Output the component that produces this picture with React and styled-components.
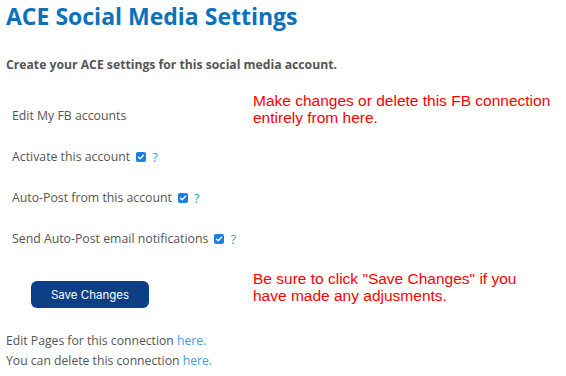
import React from 'react';
import styled, { createGlobalStyle } from 'styled-components';

const Global = createGlobalStyle`
    body {
        margin: 0;
        background: #fff;
        font-family: "Open Sans", "DejaVu Sans", sans-serif;
    }
`;

const Page = styled.div`
    width: 566px;
    height: 376px;
    padding: 0 0 0 6px;
    box-sizing: border-box;
    overflow: hidden;
`;

const Title = styled.h1`
    margin: 0;
    padding-top: 1px;
    font-size: 23px;
    line-height: 30px;
    font-weight: 700;
    color: #0b72ba;
`;

const Lead = styled.p`
    margin: 25px 0 0;
    font-size: 12.2px;
    line-height: 18px;
    font-weight: 700;
    color: #555;
`;

const Grid = styled.div`
    display: grid;
    grid-template-columns: 247px 1fr;
    margin-top: 21px;
`;

const Row = styled.div`
    display: flex;
    align-items: center;
    height: 41px;
    padding-left: 6px;
    font-size: 12.3px;
    color: #555;
`;

const Check = styled.span`
    display: inline-flex;
    align-items: center;
    justify-content: center;
    width: 10px;
    height: 10px;
    margin-left: 6px;
    border-radius: 2px;
    background: #1a7fe0;
`;

const Help = styled.span`
    margin-left: 6px;
    color: #3aa0e8;
    font-size: 13px;
`;

const Note = styled.div`
    font-family: "Liberation Sans", Arial, sans-serif;
    font-size: 15.5px;
    line-height: 17px;
    color: #f00;
    margin-top: ${p => p.$top || 0}px;
`;

const ButtonCell = styled.div`
    padding: 22px 0 0 25px;
`;

const SaveButton = styled.button`
    width: 118px;
    height: 27px;
    border: none;
    border-radius: 6px;
    background: #0d3f86;
    color: #fff;
    font-family: Inter, Roboto, sans-serif;
    font-size: 11.5px;
    cursor: pointer;
`;

const Footer = styled.div`
    margin-top: 23px;
    font-size: 12.2px;
    line-height: 20px;
    color: #555;
    a {
        color: #3aa0e8;
        text-decoration: none;
    }
`;

const Tick = () => (
    <svg width="8" height="8" viewBox="0 0 8 8">
        <path d="M1.5 4.2 L3.2 5.8 L6.5 2.2" fill="none" stroke="#fff" strokeWidth="1.4" strokeLinecap="round" strokeLinejoin="round" />
    </svg>
);

const Option = ({ label }) => (
    <Row>
        {label}
        <Check><Tick /></Check>
        <Help>?</Help>
    </Row>
);

export default function App() {
    return (<Page>
        <Global />
        <Title>ACE Social Media Settings</Title>
        <Lead>Create your ACE settings for this social media account.</Lead>
        <Grid>
            <Row>Edit My FB accounts</Row>
            <Note $top={-3}>Make changes or delete this FB connection<br />entirely from here.</Note>
            <Option label="Activate this account" />
            <div />
            <Option label="Auto-Post from this account" />
            <div />
            <Option label="Send Auto-Post email notifications" />
            <div />
            <ButtonCell><SaveButton>Save Changes</SaveButton></ButtonCell>
            <Note $top={11}>Be sure to click "Save Changes" if you<br />have made any adjusments.</Note>
        </Grid>
        <Footer>
            <div>Edit Pages for this connection <a href="#">here.</a></div>
            <div>You can delete this connection <a href="#">here.</a></div>
        </Footer>
    </Page>);
}
